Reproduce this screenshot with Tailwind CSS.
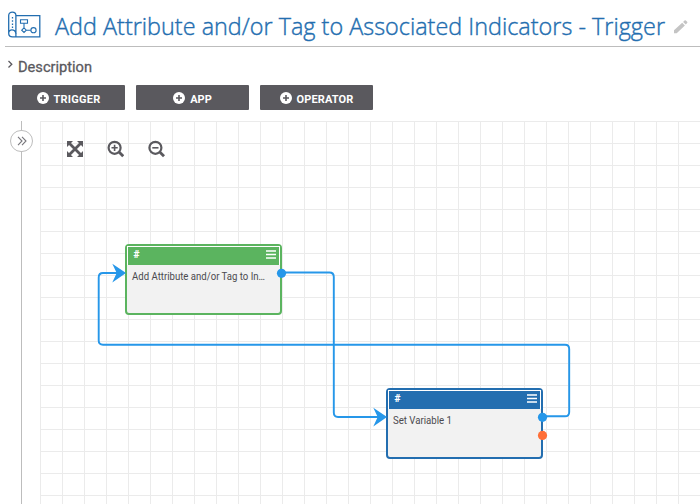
<!DOCTYPE html>
<html lang="en">
<head>
<meta charset="utf-8">
<title>Playbook Designer</title>
<script src="https://cdn.jsdelivr.net/npm/@tailwindcss/browser@4"></script>
</head>
<body class="bg-white w-[700px] h-[504px] overflow-hidden flex flex-col font-[Roboto,sans-serif] text-[#5a595e]">
<header class="ml-[5px] h-[47px] shrink-0 border-b border-[#bdbdbd] flex items-start">
  <svg class="ml-[2px] mt-[11px] w-[35px] h-[28px] shrink-0" viewBox="0 0 35 28" fill="none" stroke="#236eb0" stroke-width="1.3">
    <path d="M1.7 22V4.5C1.7 .1 8.9 .1 8.9 4.5V22.5C8 17.8 1.7 17.8 1.7 22.2C1.7 24.8 3.2 25.9 5.5 25.9H32.8V4.7H9"/>
    <path d="M8.9 22V25.9"/>
    <path d="M5.5 6V18" stroke-dasharray="1.5 1.7"/>
    <path d="M13.5 8.7h7v3.6h-7zM17 12.3v4.6M17 16.9l2.3 2.3-2.3 2.3-2.3-2.3zM19.4 19.2h4.4" stroke-width="1.1"/>
    <circle cx="26.5" cy="19.2" r="2.6" stroke-width="1.1"/>
  </svg>
  <h1 class="ml-[12px] mt-[8px] w-[612px] shrink-0 h-[36px]"><svg class="w-[612px] h-[36px] block overflow-visible" fill="#236eb0"><text x="1" y="27" textLength="610" lengthAdjust="spacingAndGlyphs" class="font-['Open_Sans',sans-serif] font-light text-[24.5px]" stroke="#236eb0" stroke-width=".4">Add Attribute and/or Tag to Associated Indicators - Trigger</text></svg></h1>
  <svg class="ml-[8px] mt-[20px] w-[14px] h-[14px] shrink-0" viewBox="0 0 14 14" fill="#c4c4c4"><path d="M0 10.3 8.2 2.8 10.9 5.5 2.7 13.2H0zM9.1 2 10.5.5Q11.2-.1 11.9.5L13.1 1.8Q13.7 2.5 13.1 3.1L11.8 4.6z"/></svg>
</header>
<section class="h-[38px] shrink-0 flex items-start pl-[7px] pt-[9px]">
  <svg class="w-[6px] h-[9px] mt-[4px]" viewBox="0 0 6 9" fill="none" stroke="#5a595e" stroke-width="1.3"><path d="M1.5 1 4.8 4.2 1.5 7.5"/></svg>
  <svg class="ml-[5px] w-[76px] h-[22px] overflow-visible" fill="#5a595e"><text x="0" y="16" textLength="74" lengthAdjust="spacingAndGlyphs" class="text-[15px]" stroke="#5a595e" stroke-width=".3">Description</text></svg>
</section>
<nav class="h-[25px] shrink-0 flex gap-[11px] pl-[12px] text-white text-[11px] font-bold">
  <button class="w-[113px] h-[25px] rounded-[1px] bg-[#5a595e] flex items-center justify-center gap-[5px]"><svg class="w-3 h-3" viewBox="0 0 12 12"><circle cx="6" cy="6" r="6" fill="#fff"/><path d="M6 3v6M3 6h6" stroke="#5a595e" stroke-width="1.6"/></svg><span class="pt-[3px] leading-none tracking-[.02em]">TRIGGER</span></button>
  <button class="w-[113px] h-[25px] rounded-[1px] bg-[#5a595e] flex items-center justify-center gap-[5px]"><svg class="w-3 h-3" viewBox="0 0 12 12"><circle cx="6" cy="6" r="6" fill="#fff"/><path d="M6 3v6M3 6h6" stroke="#5a595e" stroke-width="1.6"/></svg><span class="pt-[3px] leading-none">APP</span></button>
  <button class="w-[113px] h-[25px] rounded-[1px] bg-[#5a595e] flex items-center justify-center gap-[5px]"><svg class="w-3 h-3" viewBox="0 0 12 12"><circle cx="6" cy="6" r="6" fill="#fff"/><path d="M6 3v6M3 6h6" stroke="#5a595e" stroke-width="1.6"/></svg><span class="pt-[3px] leading-none tracking-[.01em]">OPERATOR</span></button>
</nav>
<div class="flex mt-[11px] h-[383px]">
  <aside class="relative w-[40px] shrink-0">
    <div class="ml-[21px] w-px h-full bg-[#bdbdbd]"></div>
    <button class="absolute left-[10px] top-[9px] w-[23px] h-[22px] rounded-full border border-[#bdbdbd] bg-white flex items-center justify-center"><svg class="w-[10px] h-[10px]" viewBox="0 0 10 10" fill="none" stroke="#77767b" stroke-width="1.1"><path d="M1 .8 5 5 1 9.2M5 .8 9 5 5 9.2"/></svg></button>
  </aside>
  <main class="relative w-[660px] h-[383px] overflow-hidden bg-[linear-gradient(to_right,#ebebeb_1px,transparent_1px),linear-gradient(to_bottom,#ebebeb_1px,transparent_1px)] bg-[size:22px_22px]">
    <div class="flex items-center gap-[24px] pl-[27px] pt-[19px]">
      <svg class="w-[16px] h-[16px]" viewBox="0 0 16 16" fill="#5a595e"><path d="M0 0H6L0 6zM16 0V6L10 0zM0 16V10L6 16zM16 16H10L16 10z"/><path d="M2.5 2.5 13.5 13.5M13.5 2.5 2.5 13.5" stroke="#5a595e" stroke-width="2.8"/></svg>
      <svg class="w-[17px] h-[18px]" viewBox="0 0 17 18" fill="none" stroke="#5a595e" stroke-width="2.2"><circle cx="7.6" cy="7.8" r="6"/><path d="m12 12.1 4.2 4.2" stroke-width="2.8"/><path d="M7.6 4.7v6.2M4.5 7.8h6.2" stroke-width="1.6"/></svg>
      <svg class="w-[17px] h-[18px]" viewBox="0 0 17 18" fill="none" stroke="#5a595e" stroke-width="2.2"><circle cx="7.4" cy="7.8" r="6"/><path d="m11.8 12.1 4.2 4.2" stroke-width="2.8"/><path d="M4.3 7.8h6.2" stroke-width="1.6"/></svg>
    </div>
    <!-- Nodes -->
    <article class="absolute left-[85px] top-[123px] w-[157px] h-[71px] rounded-[4px] border-2 border-[#5bb45f] bg-[#f2f2f2]">
      <div class="h-[19px] bg-[#5bb45f] border-t border-x border-white flex items-start justify-between pl-[5.5px] pr-[3px]">
        <span class="text-white text-[10.5px] font-black leading-[15px]">#</span>
        <svg class="w-[10px] h-[9px] mt-[3px]" viewBox="0 0 10 9" stroke="#fff" stroke-width="1.7"><path d="M0 1h10M0 4.5h10M0 8h10"/></svg>
      </div>
      <svg class="ml-[4px] w-[142px] h-[24px] block overflow-visible" fill="#4b4a4f"><text x="1" y="15" textLength="133" lengthAdjust="spacingAndGlyphs" class="text-[11px]">Add Attribute and/or Tag to In…</text></svg>
    </article>
    <article class="absolute left-[346px] top-[267px] w-[157px] h-[71px] rounded-[4px] border-2 border-[#236eb0] bg-[#f2f2f2]">
      <div class="h-[19px] bg-[#236eb0] border-t border-x border-white flex items-start justify-between pl-[5.5px] pr-[3px]">
        <span class="text-white text-[10.5px] font-black leading-[15px]">#</span>
        <svg class="w-[10px] h-[9px] mt-[3px]" viewBox="0 0 10 9" stroke="#fff" stroke-width="1.7"><path d="M0 1h10M0 4.5h10M0 8h10"/></svg>
      </div>
      <svg class="ml-[4px] w-[142px] h-[24px] block overflow-visible" fill="#4b4a4f"><text x="1" y="15" textLength="59" lengthAdjust="spacingAndGlyphs" class="text-[11px]">Set Variable 1</text></svg>
    </article>
    <!-- Connections and ports, in canvas coordinates -->
    <svg class="absolute left-0 top-0 w-[660px] h-[383px]" viewBox="40 121 660 383" fill="none" stroke="#2697e9" stroke-width="1.9">
      <path d="M282 272.5H329.5Q333.8 272.5 333.8 277V412.5Q333.8 417 338 417H380"/>
      <path d="M543 416.3H565Q569.2 416.3 569.2 412V349Q569.2 344.7 565 344.7H103Q98.7 344.7 98.7 340.5V277.5Q98.7 273 103 273H119"/>
      <g fill="#2697e9" stroke="none">
        <path d="M126 273 112.3 263.7 116.7 273 112.3 282.5zM387 417 373.3 407.7 377.7 417 373.3 426.5z"/>
        <circle cx="281.5" cy="273.3" r="4.6"/><circle cx="542.5" cy="417.3" r="4.6"/><circle cx="542.5" cy="435.4" r="4.6" fill="#ff6f38"/>
      </g>
    </svg>
  </main>
</div>
</body>
</html>
